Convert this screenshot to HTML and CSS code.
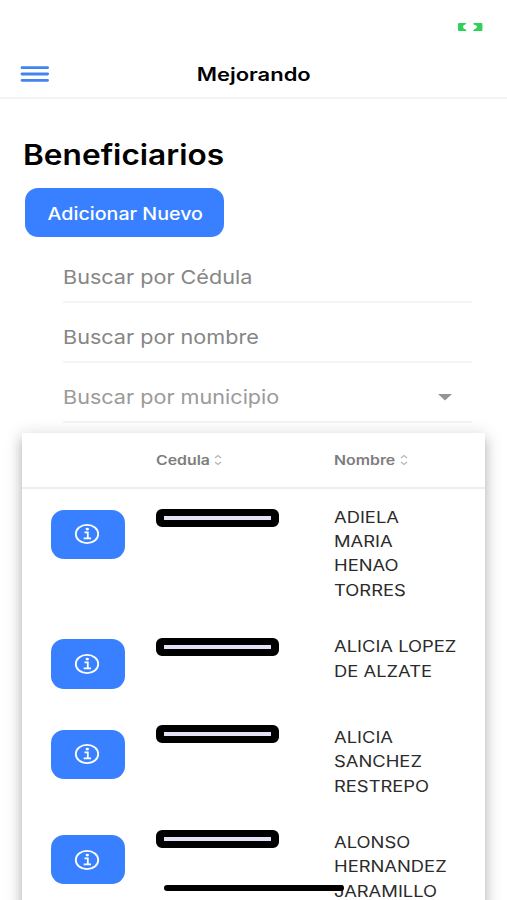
FILE: index.html
```
<!DOCTYPE html>
<html lang="es">
<head>
    <meta charset="UTF-8">
    <meta name="viewport" content="width=device-width, initial-scale=1.0">
    <title>Mejorando</title>
    <link rel="stylesheet" href="styles.css">
</head>
<body>

    <div class="status-bar">
        <svg width="26" height="10" viewBox="0 0 26 10">
            <path d="M2.2 1H9.3L8.3 2.5Q6 3 6 4.9Q6 6.5 8.5 7.3L9.5 9H2.2Q1 9 1 7.8V2.2Q1 1 2.2 1Z" fill="#30d158"/>
            <path d="M16.5 1H24.4Q25.4 1 25.4 2.2V7.8Q25.4 9 24.4 9H16L17.2 7.3Q20 6.5 20 5Q20 3.2 16.5 2.5Z" fill="#30d158"/>
        </svg>
    </div>

    <header class="toolbar">
        <button class="menu-button" aria-label="Menu">
            <svg width="30" height="18" viewBox="0 0 30 18">
                <path d="M2 2.7H27.6M2 9H27.6M2 15.3H27.6" stroke="#4384ee" stroke-width="2.8" stroke-linecap="round"/>
            </svg>
        </button>
        <div class="toolbar-title"><span class="wide">Mejorando</span></div>
    </header>

    <main>
        <h1><span class="wide">Beneficiarios</span></h1>
        <button class="add-button"><span class="wide">Adicionar Nuevo</span></button>

        <div class="filters">
            <div class="field"><span class="wide">Buscar por Cédula</span></div>
            <div class="field"><span class="wide">Buscar por nombre</span></div>
            <div class="field select">
                <span class="wide">Buscar por municipio</span>
                <svg width="14" height="7" viewBox="0 0 14 7"><path d="M0 0H14L7 6.6Z" fill="#959595"/></svg>
            </div>
        </div>

        <div class="table">
            <div class="row table-head">
                <div></div>
                <div class="th">
                    <span class="wide cedula">Cedula</span>
                    <svg width="8" height="12" viewBox="0 0 8 12"><path d="M1 4L4 1.5L7 4M1 8L4 10.5L7 8" fill="none" stroke="#b5b5b5" stroke-width="1.2"/></svg>
                </div>
                <div class="th">
                    <span class="wide nombre">Nombre</span>
                    <svg width="8" height="12" viewBox="0 0 8 12"><path d="M1 4L4 1.5L7 4M1 8L4 10.5L7 8" fill="none" stroke="#b5b5b5" stroke-width="1.2"/></svg>
                </div>
            </div>

            <div class="row">
                <button class="info-button" aria-label="Info">
                    <svg width="26" height="22" viewBox="0 0 26 22"><ellipse cx="13" cy="11" rx="11.2" ry="9.2"/><path d="M10.5 9.3H13.8V15M9.7 15.3H17"/><ellipse class="dot" cx="13.3" cy="6.1" rx="1.7" ry="1.4"/></svg>
                </button>
                <div class="redacted"></div>
                <div class="name"><span class="wide">ADIELA<br>MARIA<br>HENAO<br>TORRES</span></div>
            </div>
            <div class="row">
                <button class="info-button" aria-label="Info">
                    <svg width="26" height="22" viewBox="0 0 26 22"><ellipse cx="13" cy="11" rx="11.2" ry="9.2"/><path d="M10.5 9.3H13.8V15M9.7 15.3H17"/><ellipse class="dot" cx="13.3" cy="6.1" rx="1.7" ry="1.4"/></svg>
                </button>
                <div class="redacted"></div>
                <div class="name"><span class="wide">ALICIA LOPEZ<br>DE ALZATE</span></div>
            </div>
            <div class="row">
                <button class="info-button" aria-label="Info">
                    <svg width="26" height="22" viewBox="0 0 26 22"><ellipse cx="13" cy="11" rx="11.2" ry="9.2"/><path d="M10.5 9.3H13.8V15M9.7 15.3H17"/><ellipse class="dot" cx="13.3" cy="6.1" rx="1.7" ry="1.4"/></svg>
                </button>
                <div class="redacted high"></div>
                <div class="name"><span class="wide">ALICIA<br>SANCHEZ<br>RESTREPO</span></div>
            </div>
            <div class="row">
                <button class="info-button" aria-label="Info">
                    <svg width="26" height="22" viewBox="0 0 26 22"><ellipse cx="13" cy="11" rx="11.2" ry="9.2"/><path d="M10.5 9.3H13.8V15M9.7 15.3H17"/><ellipse class="dot" cx="13.3" cy="6.1" rx="1.7" ry="1.4"/></svg>
                </button>
                <div class="redacted high"></div>
                <div class="name"><span class="wide">ALONSO<br>HERNANDEZ<br>JARAMILLO</span></div>
            </div>
        </div>
    </main>

    <div class="home-indicator"></div>

</body>
</html>
```
FILE: styles.css
```
* {
    box-sizing: border-box;
}
body {
    margin: 0;
    height: 900px;
    overflow: hidden;
    position: relative;
    background-color: #fff;
    color: #000;
    font-family: Inter, "Liberation Sans", sans-serif;
}
button {
    border: none;
    padding: 0;
    font-family: inherit;
}
/* Wide letterforms */
.wide {
    display: inline-block;
    white-space: nowrap;
    transform: scaleX(1.185);
    transform-origin: left center;
}
.status-bar {
    height: 50px;
    padding: 21px 24.5px 0 0;
    display: flex;
    justify-content: flex-end;
    align-items: flex-start;
}
.status-bar svg {
    margin-top: 0.5px;
}
.toolbar {
    height: 49px;
    display: grid;
    grid-template-columns: 1fr auto 1fr;
    align-items: center;
    border-bottom: 2px solid #f3f3f3;
}
.menu-button {
    width: 30px;
    height: 18px;
    margin-left: 20px;
    background: none;
}
.menu-button svg {
    display: block;
}
.toolbar-title {
    padding-top: 2px;
    font-size: 18px;
    font-weight: 600;
}
.toolbar-title .wide {
    transform: scaleX(1.22);
    transform-origin: center;
}
main {
    padding: 36px 22px 0;
}
h1 {
    margin: 0 0 0 1px;
    font-size: 28px;
    font-weight: 600;
    line-height: 40px;
}
h1 .wide {
    transform: scaleX(1.13);
}
.add-button {
    display: block;
    width: 199px;
    height: 49px;
    margin: 13px 0 0 3px;
    padding: 2px 0 0 1px;
    border-radius: 13px;
    background-color: #3880ff;
    color: #fff;
    font-size: 17px;
    font-weight: 500;
}
.add-button .wide {
    transform: scaleX(1.155);
    transform-origin: center;
}
.filters {
    margin: 6px 13px 0 41px;
}
.field {
    height: 60px;
    padding-top: 11px;
    display: flex;
    align-items: center;
    justify-content: space-between;
    border-bottom: 2px solid #f5f5f5;
    color: #868686;
    font-size: 19px;
}
.field .wide {
    transform: scaleX(1.137);
}
.field.select {
    padding-right: 20px;
    color: #9a9a9a;
}
.field.select svg {
    margin-top: -1px;
}
.table {
    width: 463px;
    height: 500px;
    margin-top: 10px;
    background-color: #fff;
    box-shadow: 0 5px 5px -3px rgba(0, 0, 0, 0.2), 0 8px 10px 1px rgba(0, 0, 0, 0.14), 0 3px 16px 2px rgba(0, 0, 0, 0.14);
}
.row {
    display: grid;
    grid-template-columns: 134px 178px 1fr;
    align-items: start;
}
.table-head {
    height: 56px;
    align-items: center;
    border-bottom: 2px solid #eee;
}
.th {
    display: flex;
    align-items: center;
    color: #7d7d7d;
    font-size: 13px;
    font-weight: 600;
}
.th .wide {
    transform: scaleX(1.22);
}
.cedula {
    width: 58px;
}
.nombre {
    width: 66px;
}
.info-button {
    width: 74px;
    height: 49.5px;
    margin: 20.5px 0 20.5px 29px;
    display: flex;
    align-items: center;
    justify-content: center;
    padding-right: 2px;
    border-radius: 13px;
    background-color: #3880ff;
}
.info-button svg {
    fill: none;
    stroke: #fff;
    stroke-width: 1.8;
}
.info-button .dot {
    fill: #fff;
    stroke: none;
}
.redacted {
    width: 123px;
    height: 18px;
    margin: 19.5px 0 0 0.4px;
    border: 7px solid #000;
    border-width: 7px 8px;
    border-radius: 6px;
    background-color: #e6e0f7;
}
.redacted.high {
    margin-top: 16px;
}
.name {
    padding: 16.6px 0 15.4px;
    color: #2b2b2b;
    font-size: 15.5px;
    line-height: 24.4px;
}
.name .wide {
    display: block;
}
.home-indicator {
    position: absolute;
    left: 164px;
    top: 885px;
    width: 180px;
    height: 6px;
    border-radius: 3px;
    background-color: #000;
}
```
